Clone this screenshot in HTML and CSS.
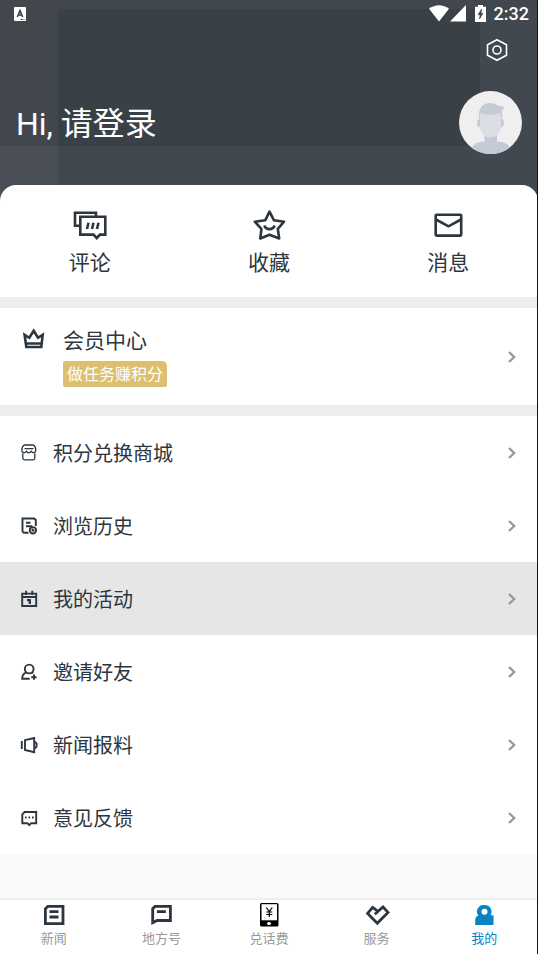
FILE: index.html
```html
<!DOCTYPE html>
<html lang="zh-CN">
<head>
<meta charset="utf-8">
<meta name="viewport" content="width=device-width, initial-scale=1">
<title>我的</title>
<link rel="stylesheet" href="styles.css">
</head>
<body>
<header class="hero">
  <div class="status">
    <svg class="status-app" width="12" height="14" viewBox="0 0 12 14" aria-hidden="true"><rect width="12" height="14" rx="1" fill="#fff"/><path d="M3.3 10 6 3.6 8.7 10M4.3 8h3.4" fill="none" stroke="#3c4147" stroke-width="1.6"/><path d="M6.5 12.5h4" stroke="#3c4147" stroke-dasharray="2 1"/></svg>
    <svg width="20" height="17" viewBox="0 0 20 17" aria-hidden="true"><path d="M0 3.8C5.8-.9 14.200-.9 20 3.800L10 16.500Z" fill="#fff"/></svg>
    <svg class="status-signal" width="16" height="17" viewBox="0 0 16 17" aria-hidden="true"><path d="M16 0v16.500H0Z" fill="#fff"/></svg>
    <svg class="status-battery" width="11" height="17" viewBox="0 0 11 17" aria-hidden="true"><path d="M0 1.800h3V0h5v1.800h3V17H0Z" fill="#fff"/><path d="M6.600 4 3 9.800h2.200L4.500 14 8 8.300H5.900Z" fill="#3c4147" stroke="#3c4147" stroke-width=".6"/></svg>
    <span>2:32</span>
  </div>
  <div class="toolbar">
    <button class="settings" aria-label="设置"><svg width="22" height="24" viewBox="0 0 22 24"><path d="M11 1.700 20.500 6.800V17.200L11 22.300 1.500 17.200V6.800Z"/><circle cx="11" cy="12" r="4"/></svg></button>
  </div>
  <div class="profile">
    <a class="greeting" href="#login">Hi, 请登录</a>
    <svg class="avatar" viewBox="0 0 63 63" aria-hidden="true">
      <circle cx="31.500" cy="31.500" r="31.500" fill="#efefef"/>
      <path d="M25.500 43h12.500v7.500c7 .500 10.500 1.500 12.700 6.200A31.500 31.500 0 0 1 13 57c2-5 5.500-6 12.500-6.500Z" fill="#c5cad6"/>
      <ellipse cx="20.500" cy="32" rx="2.300" ry="4" fill="#c5cad6"/><ellipse cx="42.500" cy="32" rx="2.300" ry="4" fill="#c5cad6"/>
      <path d="M21 20h21v16c0 6-5 10.500-10.500 10.500S21 42 21 36Z" fill="#dcdee4"/>
      <path d="M20.500 30c-1.500-10 0-17 9.500-18 6-.500 8 3.500 15 3.500 0 2-1 3.500-2.500 4 1.300 3 1 7 .200 10.500L41.500 22c-7 2-14 2.500-20.200 0Z" fill="#c5cad6"/>
    </svg>
  </div>
</header>

<main class="sheet">
  <nav class="quick" aria-label="快捷入口">
    <a href="#comments">
      <svg class="line" viewBox="0 0 34 32"><path d="M6.500 16.700H2V3.800H23V7"/><path d="M7.300 7.800H32.300V25.600H27L23.800 29 20.500 25.600H7.300Z"/><path d="M15.500 13.700l-1.500 6.300M20.500 13.700l-1.500 6.300M25.500 13.700l-1.500 6.300"/></svg>
      评论</a>
    <a href="#favorites">
      <svg class="line" viewBox="0 0 34 32"><path stroke-linejoin="round" d="M17.500 2.600 22 11.300 32 12.700 25.800 19.800 27.200 29.500 17.500 25.800 8.300 29.500 9.400 19.800 2.800 12.700 13.200 11.300Z"/><path d="M12.300 16.500C14 21.300 21 21.300 22.700 16.500"/></svg>
      收藏</a>
    <a href="#messages">
      <svg class="line" viewBox="0 0 34 32"><rect x="4.700" y="5.800" width="25.500" height="20.800" rx=".8"/><path d="M5 10.500 17.500 17.300 30 10.500"/></svg>
      消息</a>
  </nav>

  <a class="member" href="#member">
    <svg class="line member-icon" viewBox="0 0 24 22"><path d="M2.600 6.800 7.300 9.800 11.700 2.800 16 9.800 20.700 6.800 19.300 19H4.300ZM4.300 15.500H19.300"/></svg>
    <span class="member-text"><span class="member-title">会员中心</span><span class="badge">做任务赚积分</span></span>
    <svg class="chevron" viewBox="0 0 8 12"><path d="M1 1 6.200 6 1 11"/></svg>
  </a>

  <ul class="menu">
    <li><a href="#mall">
      <svg class="line thin" viewBox="0 0 18 18"><path d="M4.200 1h9.300c1.500 1 2.300 3 2.300 5.500 0 2.700-3.500 2.900-4.600.800-1 2-3.700 2-4.700 0C5.300 9.400 1.800 9.200 1.800 6.500 1.800 4 2.700 2 4.200 1ZM4.500 4.600h9M2.800 9.500v4.800c0 1 .5 1.500 1.500 1.500h9c1 0 1.500-.5 1.500-1.500V9.500"/></svg>
      <span>积分兑换商城</span><svg class="chevron" viewBox="0 0 8 12"><path d="M1 1 6.200 6 1 11"/></svg></a></li>
    <li><a href="#history">
      <svg class="line small" viewBox="0 0 18 18"><path d="M8.500 15.700H3.800L2.500 14.400V1.500H14.200L15.800 3V9M6 5.700h4.500M6 9.200h6.300"/><circle cx="12.900" cy="13.300" r="3.200"/><path d="M12.500 11.500v2h2"/></svg>
      <span>浏览历史</span><svg class="chevron" viewBox="0 0 8 12"><path d="M1 1 6.200 6 1 11"/></svg></a></li>
    <li class="active"><a href="#activities">
      <svg class="line small" viewBox="0 0 18 18"><path d="M2.200 3.600H16.200V16H2.200ZM2.200 7H16.200M6 .8V5M12.300 .8V5"/><path class="heavy" d="M7 10.200h2.800v3.800"/></svg>
      <span>我的活动</span><svg class="chevron" viewBox="0 0 8 12"><path d="M1 1 6.200 6 1 11"/></svg></a></li>
    <li><a href="#invite">
      <svg class="line small" viewBox="0 0 18 18"><circle cx="9.200" cy="6" r="4.400"/><path d="M6 9.700C3.400 10.600 2.200 12.500 2.200 15.800H9.700M11.800 9.300l1.500 1M14 11.500v5.300M11.300 14.200h5.300"/></svg>
      <span>邀请好友</span><svg class="chevron" viewBox="0 0 8 12"><path d="M1 1 6.200 6 1 11"/></svg></a></li>
    <li><a href="#tips">
      <svg class="line small" viewBox="0 0 18 18"><path d="M1.800 5v8M5 4.200 14.200 2V16.200L5 14Z"/><path d="M14.500 6.200h.8l1.300 1.500v2.800l-1.300 1.500h-.8"/></svg>
      <span>新闻报料</span><svg class="chevron" viewBox="0 0 8 12"><path d="M1 1 6.200 6 1 11"/></svg></a></li>
    <li><a href="#feedback">
      <svg class="line small" viewBox="0 0 18 18"><path d="M4.600 3H16.200V14.200H11.200L9.300 16.200 7.400 14.200H2.300V5.300Z"/><path d="M5 8.500h1.600M8.500 8.500h1.600M12 8.500h1.600"/></svg>
      <span>意见反馈</span><svg class="chevron" viewBox="0 0 8 12"><path d="M1 1 6.200 6 1 11"/></svg></a></li>
  </ul>
</main>

<nav class="tabs" aria-label="主导航">
  <a href="#news"><svg class="line bold" viewBox="0 0 24 24"><path d="M5.800 3.400H21V20.700H3.400V5.800ZM7.500 8.700h9M7.500 14h9"/></svg>新闻</a>
  <a href="#local"><svg class="line bold" viewBox="0 0 24 24"><path d="M6 3.400H21.400V17.500H8L3.700 19.700V5.700ZM7.900 8.700h9"/></svg>地方号</a>
  <a href="#recharge"><svg viewBox="0 0 24 24"><rect x="3" y="0" width="18.500" height="23.500" rx="1.500" fill="#000"/><path d="M4.500 1.200H20V17.300H4.500Z" fill="#fff"/><ellipse cx="12" cy="20.400" rx="2" ry="1.500" fill="#fff"/><path d="M9.300 4.500 12.300 8.500 15.300 4.500M12.300 8.500V14M9.300 9h6M9.300 11.500h6" fill="none" stroke="#000" stroke-width="1.200"/></svg>兑话费</a>
  <a href="#services"><svg class="line bold" viewBox="0 0 24 24"><path d="M9.800 11.200 18 4 23 9.400 12.300 20.300 2.600 10.400 7.600 4.400 13.300 8.600"/></svg>服务</a>
  <a class="current" href="#me" aria-current="page"><svg viewBox="0 0 24 24"><path fill="#0884c4" fill-rule="evenodd" d="M12.500 2a6.700 6.700 0 0 1 6 10.200H21.500V22H3.200V17c0-2.200 1-3.700 3.100-4.300A6.700 6.700 0 0 1 12.500 2Zm0 3.700a3 3 0 1 0 0 6 3 3 0 0 0 0-6Z"/></svg>我的</a>
</nav>
</body>
</html>
```

FILE: styles.css
```css
* {
  box-sizing: border-box;
}

body {
  margin: 0;
  min-height: 100vh;
  display: flex;
  flex-direction: column;
  background: #fafafa;
  color: #2d363e;
  font-family: Roboto, "Noto Sans CJK SC", sans-serif;
}

/* Dark edge line over the right side of the window */
body::after {
  content: "";
  position: fixed;
  top: 0;
  right: 0;
  bottom: 0;
  width: 1px;
  background: #10151c;
}

a {
  color: inherit;
  text-decoration: none;
}

svg {
  display: block;
  flex: none;
  overflow: visible;
}

/* Header: overlapping translucent panels over a slate ground */
.hero {
  padding-bottom: 47px;
  color: #fff;
  background:
    linear-gradient(#42474e, #42474e) 0 0 / 100% 9px no-repeat,
    linear-gradient(#42474e, #42474e) 0 0 / 58px 146px no-repeat,
    linear-gradient(#4a4e56, #4a4e56) 0 100% / 58px 100% no-repeat,
    linear-gradient(90deg, #394046 calc(100% - 58px), #41484f calc(100% - 58px)) 0 0 / 100% 146px no-repeat,
    #41484f;
}

.status {
  display: flex;
  align-items: center;
  height: 27px;
  padding: 0 9px 0 14px;
  font-size: 18px;
  font-weight: 500;
  line-height: 27px;
}

.status-app {
  margin-right: auto;
}

.status-signal {
  margin-left: 1px;
}

.status-battery {
  margin: 0 8px 0 9px;
}

.toolbar {
  display: flex;
  justify-content: flex-end;
  align-items: center;
  height: 46px;
  padding-right: 30px;
}

.settings {
  padding: 0;
  border: 0;
  background: none;
}

.settings svg {
  fill: none;
  stroke: #fff;
  stroke-width: 1.6;
}

.profile {
  display: flex;
  align-items: center;
  justify-content: space-between;
  margin-top: 18px;
  padding: 0 16px;
}

.greeting {
  padding-top: 2px;
  font-size: 32px;
  line-height: 48px;
}

.avatar {
  width: 63px;
  height: 63px;
}

.sheet {
  flex: 1;
  margin-top: -16px;
}

.line {
  fill: none;
  stroke: #2d363e;
  stroke-width: 2.6;
}

.thin {
  stroke-width: 1.3;
}

.small {
  stroke-width: 1.9;
}

.heavy {
  stroke-width: 2.3;
}

.bold {
  stroke-width: 2.8;
}

.chevron {
  width: 8px;
  height: 12px;
  margin-left: auto;
  fill: none;
  stroke: #9298ae;
  stroke-width: 2.4;
}

.quick {
  display: grid;
  grid-template-columns: repeat(3, 1fr);
  padding: 24px 0 19px;
  border-radius: 16px 16px 0 0;
  background: #fff;
}

.quick a {
  display: flex;
  flex-direction: column;
  align-items: center;
  gap: 7px;
  font-size: 21px;
  line-height: 30px;
}

.quick svg {
  width: 34px;
  height: 32px;
}

.member {
  display: flex;
  align-items: center;
  padding: 18px 22px;
  border: solid #eee;
  border-width: 11px 0;
  background: #fff;
}

.member-icon {
  align-self: flex-start;
  width: 24px;
  height: 22px;
  margin: 2px 17px 0 0;
}

.member-text {
  display: flex;
  flex-direction: column;
  align-items: flex-start;
  gap: 5px;
}

.member-title {
  font-size: 21px;
  line-height: 30px;
}

.badge {
  padding: 2px 4px 0;
  border-radius: 2px 5px 2px 2px;
  background: #dcc070;
  color: #fff;
  font-size: 16px;
  line-height: 24px;
}

.menu {
  margin: 0;
  padding: 0;
  list-style: none;
  background: #fff;
}

.menu a {
  display: flex;
  align-items: center;
  height: 73px;
  padding: 0 22px 0 20px;
  font-size: 20px;
}

.menu span {
  margin-left: 15px;
}

.menu .line {
  width: 18px;
  height: 18px;
}

.menu .active {
  background: #e6e6e6;
}

.tabs {
  position: sticky;
  bottom: 0;
  display: grid;
  grid-template-columns: repeat(5, 1fr);
  padding: 3px 0 6px;
  border-top: 2px solid #eee;
  background: #fff;
}

.tabs a {
  display: flex;
  flex-direction: column;
  align-items: center;
  gap: 3px;
  color: #999;
  font-size: 13px;
  line-height: 18px;
}

.tabs svg {
  width: 24px;
  height: 24px;
}

.tabs .current {
  color: #0884c4;
}
```
